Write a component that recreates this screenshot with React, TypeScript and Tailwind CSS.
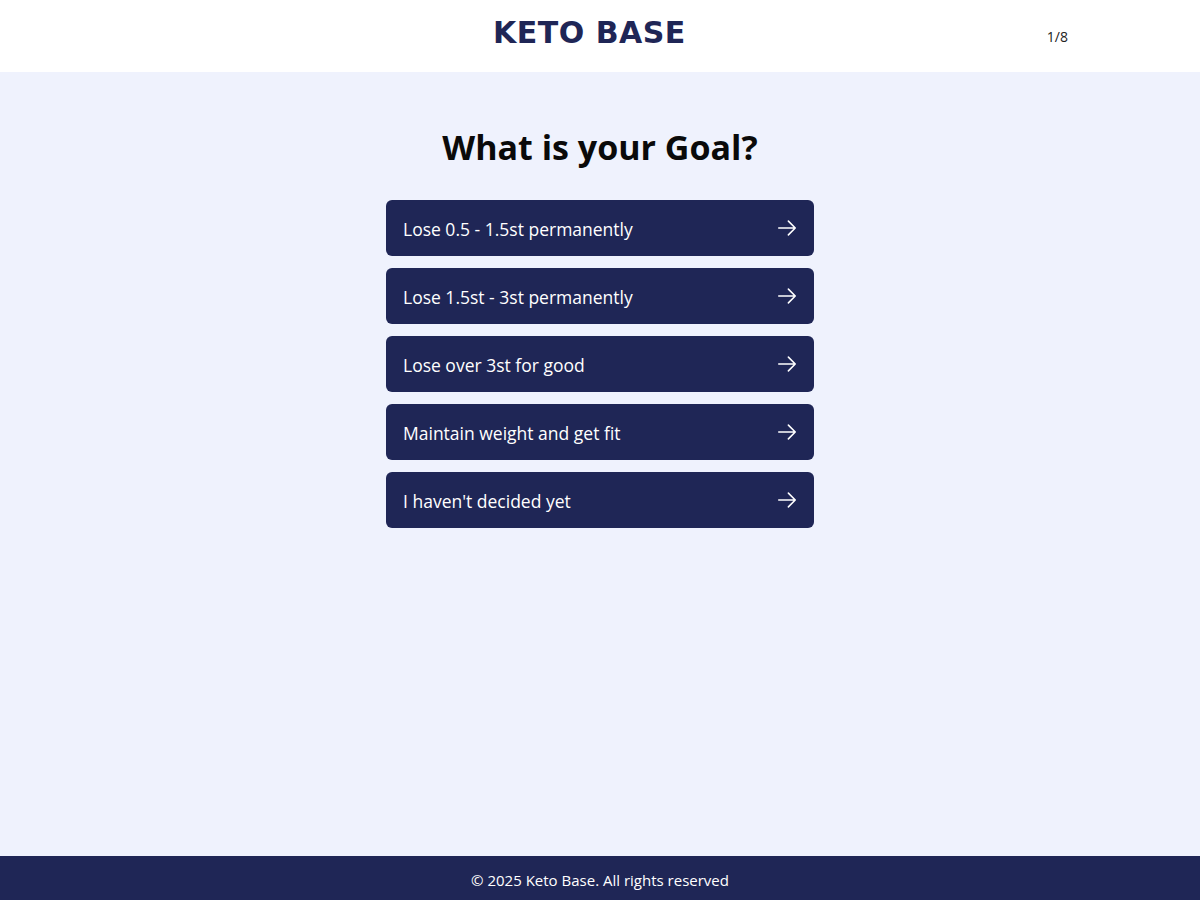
const goals = [
  "Lose 0.5 - 1.5st permanently",
  "Lose 1.5st - 3st permanently",
  "Lose over 3st for good",
  "Maintain weight and get fit",
  "I haven't decided yet",
];

const ArrowIcon = () => (
  <svg
    xmlns="http://www.w3.org/2000/svg"
    viewBox="0 0 24 24"
    fill="none"
    stroke="currentColor"
    strokeWidth={1.7}
    strokeLinecap="round"
    strokeLinejoin="round"
    className="w-[22px] h-[22px]"
  >
    <path d="M13.5 4.5 21 12m0 0-7.5 7.5M21 12H3" />
  </svg>
);

export default function App() {
  return (
    <div className="min-h-screen flex flex-col bg-[#eff2fd] font-['Open_Sans',sans-serif]">
      <header className="bg-white">
        <div className="max-w-[1000px] mx-auto px-8 h-[72px] flex items-center justify-between">
          <div />
          <h1 className="mb-2 font-['DejaVu_Sans',sans-serif] font-bold text-[30px] tracking-[0.5px] text-[#1f2656]">
            KETO BASE
          </h1>
          <div className="text-[14px] text-[#222]">1/8</div>
        </div>
      </header>

      <main className="flex-1 flex flex-col items-center pt-[55px]">
        <h2 className="text-[34px] leading-[40px] font-bold text-[#0a0a0a]">
          What is your Goal?
        </h2>
        <div className="mt-[33px] w-[428px] flex flex-col gap-3">
          {goals.map((goal) => (
            <button
              key={goal}
              type="button"
              className="h-14 rounded-md bg-[#1f2656] text-white flex items-center justify-between pl-[17px] pr-4 text-[17.5px]"
            >
              <span className="pt-[2px]">{goal}</span>
              <ArrowIcon />
            </button>
          ))}
        </div>
      </main>

      <footer className="h-11 pt-[5px] bg-[#1f2656] text-white flex items-center justify-center text-[15px]">
        © 2025 Keto Base. All rights reserved
      </footer>
    </div>
  );
}
